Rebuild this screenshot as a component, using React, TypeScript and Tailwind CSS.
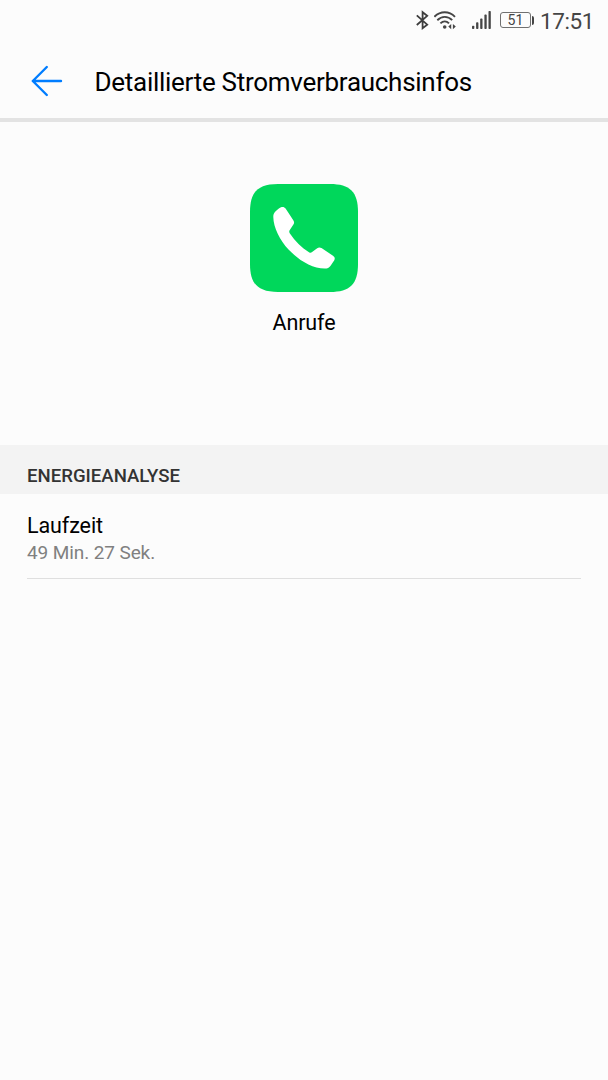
function BluetoothIcon() {
  return (
    <svg className="h-5 w-[13px]" viewBox="0 0 13 20" fill="none" stroke="#3d3d3d" strokeWidth="1.8">
      <path d="M0.8 5.4 L11.2 14.6 L6.6 18.2 V2.2 L11.2 5.8 L0.8 15" />
    </svg>
  );
}

function WifiIcon() {
  return (
    <svg className="h-5 w-[23px]" viewBox="0 0 23 20" fill="none" stroke="#454545" strokeWidth="1.9">
      <path d="M0.4 6.8 C6.4 0.8 15 0.8 21 6.8" />
      <path d="M3.3 10.2 C7.8 5.8 13.8 5.8 18.2 10.2" />
      <path d="M6.4 13.4 C9.2 10.7 12.4 10.7 15 13.4" />
      <circle cx="10.7" cy="17" r="1.8" fill="#454545" stroke="none" />
      <path d="M17.2 13.9 V19.2 L14.3 16.5 Z M18.9 13.9 V19.2 L21.8 16.5 Z" fill="#454545" stroke="none" />
    </svg>
  );
}

function SignalIcon() {
  return (
    <svg className="h-5 w-5" viewBox="0 0 20 20" fill="#454545">
      <rect x="0" y="15.8" width="2.3" height="3.3" rx=".8" />
      <rect x="4.1" y="12.2" width="2.3" height="6.9" rx=".8" />
      <rect x="8.2" y="8.6" width="2.3" height="10.5" rx=".8" />
      <rect x="12.4" y="4.6" width="2.3" height="14.5" rx=".8" />
      <rect x="16.5" y="1" width="2.3" height="18.1" rx=".8" />
    </svg>
  );
}

function StatusBar() {
  return (
    <div className="flex h-10 items-center justify-end pr-[14px] text-[#454545]">
      <BluetoothIcon />
      <span className="ml-[5px] flex"><WifiIcon /></span>
      <span className="ml-[15px] flex"><SignalIcon /></span>
      <span className="ml-2 flex items-center gap-px">
        <span className="flex h-4 w-[31px] items-center justify-center rounded-[3px] border border-[#707070] text-[14px] leading-none">51</span>
        <span className="h-[9px] w-[2px] rounded-r-xs bg-[#454545]" />
      </span>
      <span className="ml-[6px] pt-px text-[22.5px] leading-10 tracking-[-0.4px]">17:51</span>
    </div>
  );
}

function BackIcon() {
  return (
    <svg className="h-8 w-8" viewBox="0 0 32 32" fill="none" stroke="#007dff" strokeWidth="2.4" strokeLinecap="round" strokeLinejoin="round">
      <path d="M30 16 H1.8 M15.8 2 L1.8 16 L15.8 30" />
    </svg>
  );
}

function CallsIcon() {
  return (
    <svg className="size-[108px]" viewBox="0 0 108 108">
      <path fill="#00d75b" d="M28 0 H80 C100 0 108 8 108 28 V80 C108 100 100 108 80 108 H28 C8 108 0 100 0 80 V28 C0 8 8 0 28 0 Z" />
      <path fill="#fff" d="M31 23.3 C32.8 22.5 34.5 23 35.6 24.5 L43.3 36.2 C44.3 37.8 44.4 39 43.4 40.5 L39.8 46 C39 47.3 39.1 48.2 39.9 49.4 C45 57.3 51.5 63.5 59 68.2 C60.2 68.9 61 68.9 62.1 68.1 L67.2 64.2 C68.6 63.2 70 63.2 71.5 64.1 L83 71.8 C84.7 73 85.2 74.5 84.3 76.2 L80.6 81.7 C79.2 83.8 77.3 84.5 74.8 84.5 C62 84.5 49 76.5 38.5 65.5 C30 56.5 23.4 43.5 23.3 33 C23.3 30.8 23.8 29.2 25.4 27.6 C27.2 25.8 29.2 24.1 31 23.3 Z" />
    </svg>
  );
}

export default function App() {
  return (
    <div className="flex min-h-screen flex-col bg-[#fcfcfc] font-[Roboto,sans-serif] text-black">
      <StatusBar />
      <header className="flex h-[82px] items-center border-b-[4px] border-[#e3e3e3] pt-1 pl-[31px]">
        <button type="button" aria-label="Zurück"><BackIcon /></button>
        <h1 className="ml-[31.5px] pt-[2px] text-[26px] leading-8 tracking-[-0.28px] whitespace-nowrap">Detaillierte Stromverbrauchsinfos</h1>
      </header>
      <section className="flex h-[323px] flex-col items-center pt-[62px]">
        <CallsIcon />
        <p className="mt-[17px] text-[21.5px] leading-7 tracking-[-0.1px]">Anrufe</p>
      </section>
      <h2 className="h-[49px] bg-[#f3f3f3] pt-[19px] pl-[27px] text-[18.6px] leading-6 font-medium text-[#333]">ENERGIEANALYSE</h2>
      <div className="mx-[27px] h-[85px] border-b border-[#dfdfdf] pt-[18px]">
        <p className="text-[21.5px] leading-7 tracking-[-0.1px]">Laufzeit</p>
        <p className="text-[19px] leading-[25px] tracking-[-0.1px] text-[#808080]">49 Min. 27 Sek.</p>
      </div>
    </div>
  );
}
